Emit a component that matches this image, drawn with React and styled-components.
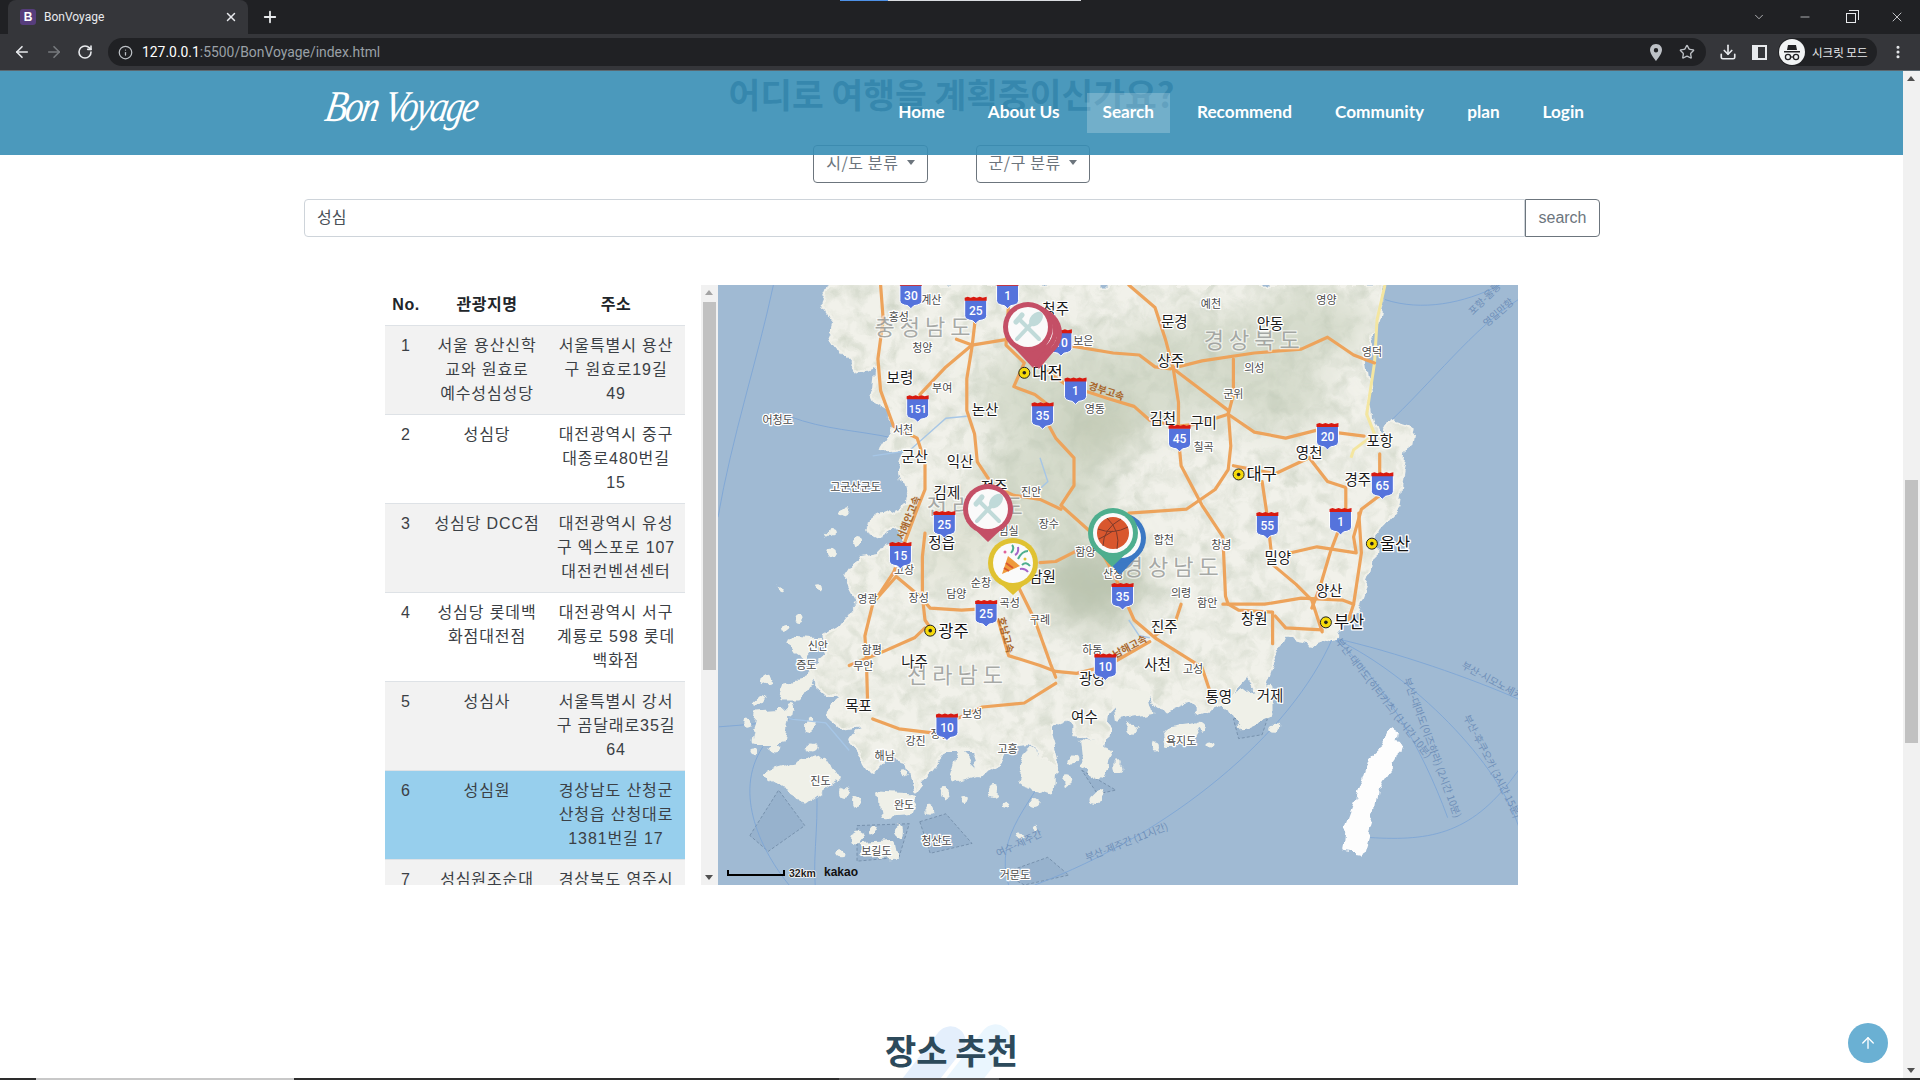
import React from 'react';
import styled, { createGlobalStyle } from 'styled-components';
import {
  ArrowLeft, ArrowRight, ArrowUp, ChevronDown, Download, Info, Minus, MoreVertical, Plus, RotateCw, Star, X,
} from 'lucide-react';

const GlobalStyle = createGlobalStyle`
  html, body { margin: 0; padding: 0; background: #fff; overflow: hidden; }
  body { font-family: "Liberation Sans", "Noto Sans CJK KR", sans-serif; color: #212529; }
  * { box-sizing: border-box; }
`;

const Screen = styled.div`
  width: 1920px;
  height: 1080px;
  display: flex;
  flex-direction: column;
  overflow: hidden;
`;

/* browser frame */
const TabStrip = styled.div`
  position: relative;
  height: 34px;
  background: #202124;
  display: flex;
  align-items: flex-end;
  padding-left: 8px;
  color: #e8eaed;
  font: 12px Roboto, sans-serif;
`;
const LoadBar = styled.div`
  position: absolute;
  top: 0;
  left: 840px;
  width: 241px;
  height: 1px;
  background: linear-gradient(90deg, #4d90e6 0 48px, #dadce0 48px);
`;
const Tab = styled.div`
  width: 240px;
  height: 34px;
  background: #35363a;
  border-radius: 8px 8px 0 0;
  display: flex;
  align-items: center;
  padding: 0 10px 0 12px;
  gap: 8px;
`;
const Favicon = styled.span`
  width: 16px;
  height: 16px;
  border-radius: 3px;
  background: #563d7c;
  color: #fff;
  font: 700 12px/16px "Liberation Sans", sans-serif;
  text-align: center;
`;
const TabTitle = styled.span`
  flex: 1;
`;
const NewTab = styled.div`
  margin: 0 0 0 13px;
  height: 34px;
  display: flex;
  align-items: center;
`;
const WindowControls = styled.div`
  margin-left: auto;
  display: flex;
  height: 34px;
`;
const ControlSlot = styled.div`
  width: 46px;
  display: flex;
  align-items: center;
  justify-content: center;
`;
const RestoreIcon = styled.span`
  position: relative;
  width: 10px;
  height: 10px;
  border: 1px solid #e8eaed;
  margin-top: 2px;
  &::after {
    content: '';
    position: absolute;
    top: -4px;
    right: -4px;
    width: 9px;
    height: 9px;
    border-top: 1px solid #e8eaed;
    border-right: 1px solid #e8eaed;
  }
`;
const Toolbar = styled.div`
  height: 37px;
  background: #35363a;
  border-bottom: 1px solid #5b6870;
  display: flex;
  align-items: center;
  padding: 0 14px 0 13px;
  color: #e8eaed;
`;
const NavIcons = styled.div`
  display: flex;
  gap: 14px;
  align-items: center;
  width: 95px;
`;
const Omnibox = styled.div`
  width: 1598px;
  height: 28px;
  border-radius: 14px;
  background: #202124;
  display: flex;
  align-items: center;
  padding: 0 11px 0 10px;
  gap: 9px;
  font: 13.9px Roboto, sans-serif;
  color: #9aa0a6;
`;
const Url = styled.span`
  flex: 1;
  b { font-weight: 400; color: #fff; }
`;
const OmniIcons = styled.div`
  display: flex;
  gap: 16px;
  align-items: center;
  color: #bdc1c6;
`;
const ToolIcons = styled.div`
  display: flex;
  align-items: center;
  margin-left: 13px;
  gap: 13px;
`;
const PanelIcon = styled.span`
  width: 15px;
  height: 15px;
  margin: 0 -2px 0 2px;
  background: #e8eaed;
  border-right: 9px solid #35363a;
  outline: 2px solid #e8eaed;
  outline-offset: -2px;
`;
const Incognito = styled.div`
  width: 99px;
  height: 28px;
  border-radius: 14px;
  background: #202124;
  display: flex;
  align-items: center;
  gap: 7px;
  padding-left: 1px;
  font: 11.5px "Noto Sans CJK KR", sans-serif;
`;
const BottomBar = styled.div`
  height: 2px;
  background: #2d2d2d;
  display: flex;
`;
const BottomSegment = styled.div`
  margin-left: ${({ $left }) => $left}px;
  width: ${({ $width }) => $width}px;
  background: ${({ $color }) => $color};
`;

/* page */
const Viewport = styled.div`
  flex: 1;
  display: flex;
  min-height: 0;
`;
const Main = styled.main`
  position: relative;
  flex: 1;
  overflow: hidden;
  background: #fff;
  padding-top: 3px;
  isolation: isolate;
`;
const PageScrollbar = styled.div`
  position: relative;
  width: 17px;
  background: #f1f1f1;
`;
const Thumb = styled.div`
  position: absolute;
  top: ${({ $top }) => $top}px;
  left: 2px;
  right: 2px;
  height: ${({ $height }) => $height}px;
  background: #c1c1c1;
`;
const Arrow = styled.div`
  position: absolute;
  left: 4px;
  ${({ $down }) => ($down ? 'bottom: 5px;' : 'top: 5px;')}
  border-left: 4px solid transparent;
  border-right: 4px solid transparent;
  ${({ $down, $color }) => ($down ? `border-top: 5px solid ${$color};` : `border-bottom: 5px solid ${$color};`)}
`;
const Header = styled.header`
  position: absolute;
  top: 0;
  left: 0;
  right: 0;
  height: 84px;
  background: rgba(55, 142, 181, 0.9);
  display: flex;
  align-items: center;
  justify-content: space-between;
  padding: 0 303px 0 326px;
  z-index: 5;
`;
const Logo = styled.div`
  color: #fff;
  font: italic 400 44px/1 "Liberation Serif", serif;
  letter-spacing: -2.5px;
  transform: skewX(-10deg) scaleX(0.82);
  transform-origin: left center;
  margin-top: -12px;
  white-space: nowrap;
`;
const Nav = styled.nav`
  display: flex;
  gap: 11px;
`;
const NavItem = styled.a`
  padding: 0 16px 3px;
  height: 40px;
  display: flex;
  align-items: center;
  color: #fff;
  font: 700 17.2px Lato, sans-serif;
  background: ${({ $active }) => ($active ? 'rgba(255,255,255,0.22)' : 'transparent')};
`;
const PageTitle = styled.h2`
  margin: 0;
  text-align: center;
  font: 700 34.5px/38px "Noto Sans CJK KR", sans-serif;
  color: #2c4964;
`;
const FilterRow = styled.div`
  display: flex;
  justify-content: center;
  gap: 48px;
  margin-top: 33px;
`;
const Dropdown = styled.button`
  height: 38px;
  padding: 0 12px 4px;
  display: flex;
  align-items: center;
  gap: 8px;
  background: #fff;
  border: 1px solid #6c757d;
  border-radius: 4px;
  color: #6c757d;
  font: 16px "Noto Sans CJK KR", sans-serif;
  letter-spacing: 0.6px;
  &::after {
    content: '';
    border-top: 5px solid #6c757d;
    border-left: 4px solid transparent;
    border-right: 4px solid transparent;
  }
`;
const SearchRow = styled.div`
  display: flex;
  margin: 16px 303px 0 304px;
`;
const SearchInput = styled.div`
  flex: 1;
  height: 38px;
  border: 1px solid #ced4da;
  border-radius: 4px 0 0 4px;
  padding: 0 12px 4px;
  display: flex;
  align-items: center;
  color: #495057;
  font: 16px "Noto Sans CJK KR", sans-serif;
`;
const SearchButton = styled.button`
  width: 75px;
  height: 38px;
  border: 1px solid #6c757d;
  border-radius: 0 4px 4px 0;
  background: #fff;
  color: #6c757d;
  font: 16px "Liberation Sans", sans-serif;
`;
const ContentRow = styled.div`
  display: flex;
  width: 1133px;
  height: 600px;
  margin: 48px auto 0;
`;
const ListPanel = styled.div`
  width: 316px;
  height: 600px;
  overflow: hidden;
`;
const ListScrollbar = styled.div`
  position: relative;
  width: 17px;
  height: 600px;
  background: #f1f1f1;
`;
const MapBox = styled.div`
  position: relative;
  width: 800px;
  height: 600px;
  background: #a0bad3;
  overflow: hidden;
`;
const Table = styled.table`
  width: 300px;
  table-layout: fixed;
  border-collapse: collapse;
  font-size: 16px;
  line-height: 24px;
  text-align: center;
  letter-spacing: 0.9px;
`;
const Th = styled.th`
  width: ${({ $width }) => $width}px;
  height: 40px;
  padding: 0;
  font-weight: 700;
  white-space: nowrap;
  letter-spacing: 0.5px;
`;
const Row = styled.tr`
  border-top: 1px solid #dee2e6;
  background: ${({ $selected, $striped }) => ($selected ? '#97cfed' : $striped ? '#f2f2f2' : '#fff')};
`;
const Td = styled.td`
  padding: 8px 0;
  height: 89px;
  vertical-align: top;
  white-space: nowrap;
  color: #3b4045;
`;
const SectionTitle = styled.h2`
  position: relative;
  margin: 146px 0 0;
  text-align: center;
  font: 700 34px/38px "Noto Sans CJK KR", sans-serif;
  color: #2d4a5b;
  z-index: 0;
  &::before, &::after {
    content: '';
    position: absolute;
    width: 30px;
    height: 90px;
    border-radius: 15px;
    transform: rotate(38deg);
    z-index: -1;
  }
  &::before { left: 917px; top: -11px; background: #e4effc; }
  &::after { left: 962px; top: -13px; background: #eaf6fe; }
`;
const BackToTop = styled.div`
  position: absolute;
  right: 15px;
  bottom: 15px;
  width: 40px;
  height: 40px;
  border-radius: 50%;
  background: #6ab0d3;
  color: #fff;
  display: flex;
  align-items: center;
  justify-content: center;
  z-index: 6;
`;

const places = [
  [['서울 용산신학', '교와 원효로', '예수성심성당'], ['서울특별시 용산', '구 원효로19길', '49']],
  [['성심당'], ['대전광역시 중구', '대종로480번길', '15']],
  [['성심당 DCC점'], ['대전광역시 유성', '구 엑스포로 107', '대전컨벤션센터']],
  [['성심당 롯데백', '화점대전점'], ['대전광역시 서구', '계룡로 598 롯데', '백화점']],
  [['성심사'], ['서울특별시 강서', '구 곰달래로35길', '64']],
  [['성심원'], ['경상남도 산청군', '산청읍 산청대로', '1381번길 17']],
  [['성심원조순대', '국밥'], ['경상북도 영주시', '풍기읍 소백로', '1234']],
];

const Lines = ({ lines }) => lines.map((line) => <div key={line}>{line}</div>);

/* map drawing: coordinates below were read off the reference, scaled into the 800x600 map */
const mx = (x) => (x - 34) * 0.5227;
const my = (y) => (y - 13) * 0.3955;
const toPoints = (list) => list.map(([x, y]) => `${mx(x).toFixed(1)},${my(y).toFixed(1)}`).join(' ');

const mainland = [
  [250, 13], [235, 60], [262, 110], [250, 150], [275, 195], [300, 235], [335, 215], [330, 270], [350, 330], [370, 375],
  [345, 430], [400, 425], [385, 480], [395, 540], [410, 565], [345, 600], [315, 630], [345, 650], [375, 625], [400, 655],
  [350, 690], [310, 700], [280, 760], [305, 820], [270, 880], [235, 905], [250, 950], [205, 1000], [240, 1040], [270, 1060],
  [240, 1095], [270, 1130], [320, 1120], [290, 1170], [330, 1240], [355, 1200], [400, 1215], [410, 1290], [440, 1240], [470, 1190],
  [520, 1190], [535, 1250], [570, 1230], [590, 1175], [630, 1170], [680, 1230], [660, 1130], [705, 1105], [730, 1150],
  [768, 1180], [775, 1090], [810, 1040], [850, 1030], [885, 1090], [935, 1060], [960, 1090], [1000, 1070], [1050, 1000],
  [1075, 1040], [1095, 960], [1115, 900], [1180, 915], [1210, 900], [1252, 830], [1280, 730], [1290, 640], [1335, 570],
  [1345, 480], [1360, 375], [1325, 360], [1300, 405], [1285, 350], [1270, 205], [1295, 100], [1310, 13],
];

const islands = [
  [[125, 1245], [235, 1205], [262, 1260], [200, 1320], [180, 1290]],
  [[345, 1305], [410, 1310], [400, 1345], [350, 1350]],
  [[310, 1430], [365, 1425], [370, 1455], [320, 1460]],
  [[1000, 1060], [1090, 1035], [1090, 1100], [1040, 1130], [1020, 1105]],
  [[790, 1030], [850, 1040], [860, 1095], [800, 1110]],
  [[730, 1170], [785, 1190], [770, 1255], [735, 1230]],
  [[630, 1190], [680, 1240], [675, 1295], [610, 1265]],
  [[160, 1025], [210, 1010], [190, 1060], [150, 1060]],
  [[170, 910], [225, 915], [195, 960]],
  [[115, 1095], [165, 1090], [155, 1170], [105, 1170]],
  [[495, 1200], [530, 1245], [480, 1265]],
  [[895, 1135], [950, 1125], [930, 1170], [900, 1170]],
];

const tsushima = [[1325, 1135], [1340, 1150], [1330, 1210], [1290, 1290], [1280, 1370], [1260, 1455], [1235, 1450], [1240, 1380], [1265, 1290], [1285, 1210], [1310, 1180]];

// small islets scattered off the south west coast: x, y, size
const islets = [
  [130, 1010, 6], [110, 1060, 5], [170, 1080, 4], [90, 1130, 5], [140, 1190, 6], [100, 1200, 4], [215, 1180, 5], [275, 1290, 6],
  [300, 1320, 5], [330, 1395, 5], [300, 1410, 6], [270, 1450, 4], [380, 1390, 5], [440, 1340, 4], [470, 1300, 5], [510, 1310, 4],
  [560, 1290, 5], [590, 1330, 4], [640, 1320, 5], [700, 1270, 5], [710, 1210, 4], [800, 1230, 4], [830, 1140, 5], [870, 1180, 4],
  [960, 1130, 5], [980, 1170, 4], [1100, 1130, 4], [280, 590, 5], [250, 640, 4], [300, 660, 6], [250, 690, 5], [225, 780, 4],
  [150, 780, 3], [190, 860, 4], [160, 880, 5], [210, 1130, 5], [390, 1250, 4], [640, 1385, 3], [760, 1310, 5], [615, 1405, 3],
];

const parks = [
  [[95, 1405], [150, 1290], [200, 1380], [130, 1445]],
  [[420, 1370], [470, 1350], [520, 1425], [440, 1450]],
  [[580, 1500], [665, 1460], [705, 1505], [620, 1530]],
  [[300, 1380], [400, 1375], [380, 1460], [300, 1470]],
  [[1020, 1110], [1090, 1090], [1075, 1150], [1030, 1160]],
  [[730, 1240], [795, 1290], [760, 1300]],
];

const roads = [
  [[345, 13], [350, 100], [340, 200], [345, 280], [370, 370], [415, 400], [430, 460], [430, 530], [415, 580], [395, 650], [370, 740], [330, 820], [315, 900], [318, 960], [320, 1060], [300, 1085]],
  [[527, 90], [520, 170], [510, 250], [510, 330], [525, 390], [530, 460], [560, 520], [600, 545], [650, 555], [690, 580]],
  [[420, 290], [470, 220], [520, 165], [590, 150]],
  [[490, 150], [520, 165]],
  [[590, 13], [590, 60], [585, 165], [620, 210], [600, 270], [640, 290], [660, 310]],
  [[640, 210], [700, 265], [780, 300], [830, 320], [860, 355], [915, 370], [950, 365], [1010, 340], [1060, 385], [1120, 400], [1180, 380], [1270, 395]],
  [[655, 340], [680, 400], [715, 450], [715, 520], [690, 570], [745, 635], [790, 740], [810, 800], [830, 860], [870, 905], [960, 980], [975, 1040]],
  [[700, 165], [790, 185], [840, 190], [870, 220], [900, 225], [960, 205], [1060, 185], [1150, 175], [1200, 145], [1250, 190], [1290, 210]],
  [[820, 13], [870, 70], [890, 150], [905, 225], [915, 310], [915, 370]],
  [[905, 225], [960, 280], [1010, 330], [1015, 420], [1010, 480], [985, 530], [930, 580], [820, 590]],
  [[915, 400], [920, 470], [960, 570], [1000, 650], [1005, 800], [1010, 820]],
  [[1000, 820], [1080, 820], [1150, 805], [1230, 810], [1250, 820]],
  [[1100, 850], [1120, 880], [1190, 885]],
  [[1010, 820], [1030, 835], [1095, 840], [1095, 920]],
  [[1075, 510], [1085, 600], [1095, 720], [1140, 770], [1170, 810], [1190, 890]],
  [[1225, 620], [1205, 690], [1185, 780], [1170, 830]],
  [[1260, 590], [1265, 690], [1250, 820], [1240, 860]],
  [[1305, 540], [1265, 580], [1250, 650], [1255, 690], [1180, 675], [1130, 690]],
  [[1165, 450], [1200, 510], [1235, 525], [1235, 590]],
  [[1020, 470], [1100, 490], [1165, 450]],
  [[1020, 200], [1020, 290], [1010, 340]],
  [[570, 860], [590, 950], [650, 975], [680, 990], [720, 995], [780, 975], [860, 915]],
  [[680, 1020], [620, 1070], [540, 1080], [490, 1110], [440, 1145], [380, 1135], [330, 1110]],
  [[610, 780], [640, 860], [670, 970], [680, 1005]],
  [[560, 830], [500, 835], [440, 830], [420, 800], [375, 750], [335, 810]],
  [[430, 880], [410, 905], [350, 940], [285, 975]],
  [[430, 640], [425, 700], [425, 800], [430, 860], [440, 880]],
  [[650, 715], [680, 712], [720, 685]],
  [[920, 820], [910, 860], [870, 900]],
  [[1300, 440], [1300, 490]],
];

const rivers = [
  [[330, 445], [400, 432], [470, 350], [510, 345]],
  [[650, 450], [665, 510], [640, 540]],
  [[820, 860], [840, 900], [860, 905]],
  [[170, 1110], [240, 1120], [285, 1190]],
];

const seaRoutes = [
  'M1210,905 C1300,1000 1380,1180 1430,1360',
  'M1210,905 C1340,980 1520,1200 1565,1380',
  'M1210,905 C1330,940 1480,1010 1565,1060',
  'M1210,905 C1130,1150 900,1400 640,1530',
  'M680,1200 C640,1320 560,1400 590,1530',
  'M1310,370 C1400,260 1480,120 1565,50',
  'M1310,50 C1380,80 1460,60 1530,13',
  'M140,13 C110,200 60,400 34,600',
  'M170,345 C240,380 300,380 370,400',
  'M1280,1410 C1400,1420 1480,1400 1565,1240',
  'M36,1130 C90,1125 130,1120 180,1110',
  'M120,1180 C60,1300 120,1450 170,1530',
  'M220,1250 C230,1350 215,1450 220,1530',
];

const cities = [
  ['대전', 620, 235], ['대구', 1030, 492], ['울산', 1285, 667], ['부산', 1197, 866], ['광주', 440, 887],
];
const bigLabels = [
  ['보령', 382, 247], ['논산', 545, 327], ['김천', 885, 350], ['구미', 963, 360], ['군산', 410, 447], ['익산', 497, 460],
  ['김제', 472, 538], ['전주', 562, 522], ['정읍', 462, 665], ['남원', 655, 750], ['영천', 1165, 437], ['포항', 1300, 405],
  ['경주', 1258, 505], ['밀양', 1105, 703], ['양산', 1203, 785], ['창원', 1060, 857], ['진주', 888, 877], ['사천', 875, 973],
  ['통영', 992, 1053], ['거제', 1090, 1050], ['광양', 750, 1008], ['여수', 735, 1105], ['나주', 410, 965], ['목포', 303, 1075],
  ['상주', 900, 203], ['문경', 907, 105], ['안동', 1090, 110], ['청주', 680, 72],
];
const smallLabels = [
  ['계산', 442, 50], ['홍성', 380, 95], ['청양', 425, 173], ['부여', 463, 273], ['서천', 388, 380], ['보은', 733, 155],
  ['영동', 755, 327], ['예천', 977, 60], ['영양', 1198, 50], ['영덕', 1285, 183], ['의성', 1060, 223], ['군위', 1020, 288],
  ['칠곡', 963, 423], ['진안', 633, 537], ['장수', 667, 617], ['임실', 590, 635], ['합천', 887, 658], ['창녕', 997, 670],
  ['함양', 737, 687], ['산청', 790, 743], ['의령', 920, 793], ['함안', 970, 818], ['고창', 390, 733], ['영광', 320, 808],
  ['장성', 418, 805], ['담양', 490, 795], ['순창', 537, 767], ['곡성', 592, 818], ['구례', 650, 860], ['하동', 750, 935],
  ['고성', 943, 983], ['신안', 225, 927], ['함평', 328, 935], ['무안', 312, 977], ['증도', 203, 973], ['보성', 520, 1098],
  ['장흥', 460, 1148], ['강진', 412, 1167], ['해남', 353, 1205], ['고흥', 588, 1185], ['진도', 230, 1268], ['완도', 390, 1327],
  ['청산도', 452, 1420], ['보길도', 337, 1443], ['욕지도', 920, 1167], ['거문도', 602, 1505], ['어청도', 148, 355], ['고군산군도', 297, 525],
];
const provinces = [
  ['충청남도', 430, 120], ['경상북도', 1060, 153], ['전라북도', 530, 572], ['경상남도', 905, 725], ['전라남도', 492, 1000],
];
const shields = [
  ['30', 403, 35], ['1', 588, 35], ['25', 527, 73], ['10', 690, 155], ['151', 416, 322], ['35', 655, 340], ['1', 718, 277],
  ['45', 917, 397], ['20', 1200, 392], ['65', 1305, 517], ['1', 1225, 607], ['55', 1085, 617], ['25', 467, 615],
  ['15', 383, 693], ['35', 808, 797], ['25', 547, 840], ['10', 775, 975], ['10', 472, 1127],
];
const routeLabels = [
  ['부산-대마도(히타카츠) (1시간 10분)', 1215, 915, 1380, 1195],
  ['부산-대마도(이즈하라) (2시간 10분)', 1345, 1010, 1440, 1350],
  ['부산-후쿠오카 (3시간 15분)', 1460, 1105, 1560, 1365],
  ['부산-시모노세키', 1455, 980, 1565, 1060],
  ['부산-제주간 (11시간)', 740, 1470, 905, 1385],
  ['여수-제주간', 570, 1460, 665, 1400],
  ['포항-울릉', 1478, 90, 1535, 15],
  ['영일만항', 1505, 120, 1565, 50],
];
const roadNames = [
  ['서해안고속', 405, 605, -68],
  ['경부고속', 775, 290, 18],
  ['호남고속', 578, 900, 75],
  ['남해고속', 825, 935, -28],
];

const Halo = { paintOrder: 'stroke', stroke: '#fff', strokeWidth: 2.5, strokeLinejoin: 'round' };

const Shield = ({ label, x, y }) => (
  <g transform={`translate(${mx(x)},${my(y)})`}>
    <path d="M-11,-9 L11,-9 L11,7 Q11,11 3,12 L0,15 L-3,12 Q-11,11 -11,7 Z" fill="#5573dc" stroke="#fff" strokeWidth="1" />
    <path d="M-11,-8 L-11,-11 L-8,-12 L-5,-11 L-2,-12 L1,-11 L4,-12 L7,-11 L11,-12 L11,-8 Z" fill="#d81a10" />
    <text x="0" y="6" textAnchor="middle" fontSize={label.length > 2 ? 10.5 : 12} fontWeight="500" fill="#fff" fontFamily="Roboto, sans-serif">{label}</text>
  </g>
);

const Pin = ({ cx, cy, tip, color, children }) => (
  <g>
    <path d={`M${cx - 22},${cy + 12} L${tip[0]},${tip[1]} L${cx + 22},${cy + 12} Z`} fill={color} />
    <circle cx={cx} cy={cy} r="25" fill={color} />
    <circle cx={cx} cy={cy} r="20" fill="#fafafa" />
    {children}
  </g>
);

const Cutlery = ({ cx, cy }) => (
  <g transform={`translate(${cx},${cy})`} stroke="#c0dad9" fill="#c0dad9" strokeLinecap="round">
    <line x1="-11" y1="12" x2="6" y2="-6" strokeWidth="4" />
    <ellipse cx="8" cy="-8" rx="5.5" ry="8.5" transform="rotate(42 8 -8)" stroke="none" />
    <line x1="11" y1="12" x2="-8" y2="-7" strokeWidth="4" />
    <path d="M-12,-5 L-6,-12" strokeWidth="5" />
  </g>
);

const Basketball = ({ cx, cy }) => (
  <g transform={`translate(${cx},${cy})`} fill="none" stroke="#7c3a2b" strokeWidth="1">
    <circle r="16" fill="#d9572e" stroke="none" />
    <path d="M-15,-4 Q0,2 15,-6 M-6,-15 Q8,-2 4,16 M8,-14 Q-10,-4 -10,13 M-14,6 Q-6,2 0,-2" />
  </g>
);

const Popper = ({ cx, cy }) => (
  <g transform={`translate(${cx},${cy})`}>
    <path d="M-11,11 L-5,-7 L7,3 Z" fill="#ef9a3c" />
    <path d="M-9,5 L-4,8 M-7,0 L0,5" stroke="#d9572e" strokeWidth="2" />
    <path d="M-2,-10 Q2,-15 -1,-18 M5,-4 Q9,-12 15,-12 M9,2 Q13,-2 17,3" fill="none" stroke="#4eae8e" strokeWidth="2" />
    <path d="M2,-8 Q6,-10 5,-16 M7,6 Q12,5 15,9" fill="none" stroke="#a565c9" strokeWidth="2" />
    <circle cx="-8" cy="-11" r="1.5" fill="#e0629a" />
    <circle cx="12" cy="-4" r="1.5" fill="#e0c232" />
  </g>
);

const KoreaMap = () => (
  <svg width="800" height="600" viewBox="0 0 800 600" fontFamily="'Noto Sans CJK KR', sans-serif">
    <defs>
      <clipPath id="landClip"><polygon points={toPoints(mainland)} /></clipPath>
      <filter id="soft" x="-30%" y="-30%" width="160%" height="160%"><feGaussianBlur stdDeviation="16" /></filter>
      <filter id="grain" x="0" y="0" width="100%" height="100%">
        <feTurbulence type="fractalNoise" baseFrequency="0.06" numOctaves="4" seed="7" />
        <feColorMatrix values="0 0 0 0 0.5  0 0 0 0 0.56  0 0 0 0 0.45  0.7 0.7 0 0 -0.58" />
      </filter>
      <filter id="coast" x="-5%" y="-5%" width="110%" height="110%">
        <feTurbulence type="fractalNoise" baseFrequency="0.05" numOctaves="3" seed="11" result="n" />
        <feDisplacementMap in="SourceGraphic" in2="n" scale="16" xChannelSelector="R" yChannelSelector="G" />
      </filter>
    </defs>
    <rect width="800" height="600" fill="#a0bad3" />
    {parks.map((p) => (
      <polygon key={p[0].join()} points={toPoints(p)} fill="#8fabc8" fillOpacity="0.55" stroke="#6f89a5" strokeWidth="0.8" strokeDasharray="3 2" />
    ))}
    {seaRoutes.map((d) => (
      <path key={d} d={d.replace(/(\d+),(\d+)/g, (m, a, b) => `${mx(+a).toFixed(1)},${my(+b).toFixed(1)}`)} fill="none" stroke="#7ea6d6" strokeWidth="0.9" />
    ))}
    <g filter="url(#coast)">
      <polygon points={toPoints(mainland)} fill="#f1f1ea" stroke="#f1f1ea" strokeWidth="5" strokeLinejoin="round" />
      {islands.map((p) => (
        <polygon key={p[0].join()} points={toPoints(p)} fill="#eff0e8" stroke="#eff0e8" strokeWidth="5" strokeLinejoin="round" />
      ))}
      {islets.map(([x, y, r]) => <circle key={`${x}-${y}`} cx={mx(x)} cy={my(y)} r={r} fill="#eff0e8" />)}
      <polygon points={toPoints(tsushima)} fill="#fdfdfd" stroke="#fdfdfd" strokeWidth="3" strokeLinejoin="round" />
      <g clipPath="url(#landClip)">
        <g filter="url(#soft)" fill="#d6dbcc">
          <ellipse cx="360" cy="110" rx="100" ry="55" />
          <ellipse cx="480" cy="80" rx="90" ry="50" />
          <ellipse cx="325" cy="210" rx="65" ry="60" />
          <ellipse cx="375" cy="300" rx="55" ry="40" fill="#bcc5b0" />
          <ellipse cx="380" cy="140" rx="40" ry="35" fill="#c6cdb9" />
          <ellipse cx="560" cy="110" rx="50" ry="35" />
          <ellipse cx="590" cy="40" rx="60" ry="35" />
          <ellipse cx="230" cy="260" rx="55" ry="40" fill="#e2e4d7" />
        </g>
        <rect width="800" height="600" filter="url(#grain)" />
      </g>
    </g>
    {rivers.map((r) => <polyline key={r[0].join()} points={toPoints(r)} fill="none" stroke="#a6c6e6" strokeWidth="1.4" />)}
    <polyline points={toPoints([[1310, 13], [1295, 100], [1290, 210], [1275, 340], [1290, 390], [1250, 430], [1245, 450]])} fill="none" stroke="#f4e6a0" strokeWidth="3" />
    {roads.map((r) => (
      <polyline key={r[0].join() + r[1].join()} points={toPoints(r)} fill="none" stroke="#eda35b" strokeWidth="3.2" strokeLinejoin="round" strokeLinecap="round" />
    ))}
    {routeLabels.map(([t, x1, y1, x2, y2]) => {
      const a = (Math.atan2(my(y2) - my(y1), mx(x2) - mx(x1)) * 180) / Math.PI;
      return (
        <text key={t} transform={`translate(${mx(x1)},${my(y1)}) rotate(${a})`} fontSize="10" fill="#6f8fb8">{t}</text>
      );
    })}
    {roadNames.map(([t, x, y, a]) => (
      <text key={t} transform={`translate(${mx(x)},${my(y)}) rotate(${a})`} textAnchor="middle" fontSize="10" fontWeight="700" fill="#a9672c">{t}</text>
    ))}
    {provinces.map(([t, x, y]) => (
      <text key={t} x={mx(x)} y={my(y) + 8} textAnchor="middle" fontSize="22" letterSpacing="5" fill="#8c8f8c" fillOpacity="0.75" style={{ ...Halo, strokeOpacity: 0.6 }}>{t}</text>
    ))}
    {smallLabels.map(([t, x, y]) => (
      <text key={t} x={mx(x)} y={my(y) + 4} textAnchor="middle" fontSize="11" fill="#4a4a4a" style={Halo}>{t}</text>
    ))}
    {bigLabels.map(([t, x, y]) => (
      <text key={t} x={mx(x)} y={my(y) + 5.5} textAnchor="middle" fontSize="14.5" fill="#1c1c1c" style={Halo}>{t}</text>
    ))}
    {cities.map(([t, x, y]) => (
      <g key={t}>
        <circle cx={mx(x)} cy={my(y)} r="5.5" fill="#f5d90a" stroke="#222" strokeWidth="1" />
        <circle cx={mx(x)} cy={my(y)} r="1.8" fill="#222" />
        <text x={mx(x) + 8} y={my(y) + 6} fontSize="16.5" fill="#111" style={Halo}>{t}</text>
      </g>
    ))}
    {shields.map(([t, x, y]) => <Shield key={`${t}-${x}`} label={t} x={x} y={y} />)}
    <Pin cx={319} cy={48} tip={[321, 84]} color="#c44f66" />
    <Pin cx={315} cy={45} tip={[318, 83]} color="#c44f66" />
    <Pin cx={310} cy={42} tip={[315, 83]} color="#c44f66"><Cutlery cx={310} cy={42} /></Pin>
    <Pin cx={270} cy={224} tip={[270, 257]} color="#c44f66"><Cutlery cx={270} cy={224} /></Pin>
    <Pin cx={295} cy={278} tip={[295, 310]} color="#e0c232"><Popper cx={295} cy={278} /></Pin>
    <Pin cx={403} cy={253} tip={[402, 290]} color="#3b78c4" />
    <Pin cx={395} cy={248} tip={[394, 282]} color="#4eae8e"><Basketball cx={395} cy={248} /></Pin>
    <path d="M10,585 V590 H66 V585" fill="none" stroke="#000" strokeWidth="2" />
    <text x="71" y="592" fontSize="10.5" fontWeight="700" fontFamily="'Liberation Sans', sans-serif" fill="#222" style={{ ...Halo, strokeWidth: 1.5 }}>32km</text>
    <text x="106" y="591" fontSize="12" fontWeight="700" fontFamily="'Liberation Sans', sans-serif" fill="#111">kakao</text>
  </svg>
);

const IncognitoBadge = () => (
  <svg width="26" height="26" viewBox="0 0 26 26">
    <circle cx="13" cy="13" r="13" fill="#f1f3f4" />
    <path d="M9,6 H17 L18,11 H8 Z M5,12 H21 V13.5 H5 Z" fill="#202124" />
    <circle cx="9" cy="18" r="2.6" fill="none" stroke="#202124" strokeWidth="1.3" />
    <circle cx="17" cy="18" r="2.6" fill="none" stroke="#202124" strokeWidth="1.3" />
    <path d="M11.5,18 H14.5" stroke="#202124" strokeWidth="1.2" />
  </svg>
);

const LocationPin = () => (
  <svg width="14" height="17" viewBox="0 0 14 17">
    <path fillRule="evenodd" d="M7,0 C3,0 1,3 1,6 C1,10 7,17 7,17 C7,17 13,10 13,6 C13,3 11,0 7,0 Z M7,4 A2.2,2.2 0 1 1 7,8.4 A2.2,2.2 0 1 1 7,4 Z" fill="#bdc1c6" />
  </svg>
);

const App = () => (
  <Screen>
    <GlobalStyle />
    <TabStrip>
      <LoadBar />
      <Tab>
        <Favicon>B</Favicon>
        <TabTitle>BonVoyage</TabTitle>
        <X size={14} strokeWidth={2.5} />
      </Tab>
      <NewTab><Plus size={18} strokeWidth={2.4} /></NewTab>
      <WindowControls>
        <ControlSlot><ChevronDown size={14} strokeWidth={1.2} /></ControlSlot>
        <ControlSlot><Minus size={14} strokeWidth={1.2} /></ControlSlot>
        <ControlSlot><RestoreIcon /></ControlSlot>
        <ControlSlot><X size={16} strokeWidth={1.2} /></ControlSlot>
      </WindowControls>
    </TabStrip>
    <Toolbar>
      <NavIcons>
        <ArrowLeft size={18} strokeWidth={2.2} />
        <ArrowRight size={18} strokeWidth={2.2} color="#777a7e" />
        <RotateCw size={16} strokeWidth={2.4} />
      </NavIcons>
      <Omnibox>
        <Info size={15} color="#bdc1c6" />
        <Url><b>127.0.0.1</b>:5500/BonVoyage/index.html</Url>
        <OmniIcons>
          <LocationPin />
          <Star size={16} />
        </OmniIcons>
      </Omnibox>
      <ToolIcons>
        <Download size={18} strokeWidth={2.2} />
        <PanelIcon />
        <Incognito>
          <IncognitoBadge />
          시크릿 모드
        </Incognito>
        <MoreVertical size={16} strokeWidth={2.6} />
      </ToolIcons>
    </Toolbar>
    <Viewport>
      <Main>
        <Header>
          <Logo>Bon Voyage</Logo>
          <Nav>
            {['Home', 'About Us', 'Search', 'Recommend', 'Community', 'plan', 'Login'].map((item) => (
              <NavItem key={item} $active={item === 'Search'}>{item}</NavItem>
            ))}
          </Nav>
        </Header>
        <PageTitle>어디로 여행을 계획중이신가요?</PageTitle>
        <FilterRow>
          <Dropdown>시/도 분류</Dropdown>
          <Dropdown>군/구 분류</Dropdown>
        </FilterRow>
        <SearchRow>
          <SearchInput>성심</SearchInput>
          <SearchButton>search</SearchButton>
        </SearchRow>
        <ContentRow>
          <ListPanel>
            <Table>
              <thead>
                <tr>
                  <Th $width={42}>No.</Th>
                  <Th $width={120}>관광지명</Th>
                  <Th $width={138}>주소</Th>
                </tr>
              </thead>
              <tbody>
                {places.map(([name, address], i) => (
                  <Row key={name[0]} $striped={i % 2 === 0} $selected={i === 5}>
                    <Td>{i + 1}</Td>
                    <Td><Lines lines={name} /></Td>
                    <Td><Lines lines={address} /></Td>
                  </Row>
                ))}
              </tbody>
            </Table>
          </ListPanel>
          <ListScrollbar>
            <Arrow $color="#a3a3a3" />
            <Thumb $top={17} $height={368} />
            <Arrow $down $color="#505050" />
          </ListScrollbar>
          <MapBox><KoreaMap /></MapBox>
        </ContentRow>
        <SectionTitle>장소 추천</SectionTitle>
        <BackToTop><ArrowUp size={18} strokeWidth={1.8} /></BackToTop>
      </Main>
      <PageScrollbar>
        <Arrow $color="#505050" />
        <Thumb $top={409} $height={263} />
        <Arrow $down $color="#505050" />
      </PageScrollbar>
    </Viewport>
    <BottomBar>
      <BottomSegment $left={36} $width={258} $color="#c8c8c8" />
      <BottomSegment $left={545} $width={160} $color="#555" />
    </BottomBar>
  </Screen>
);

export default App;
